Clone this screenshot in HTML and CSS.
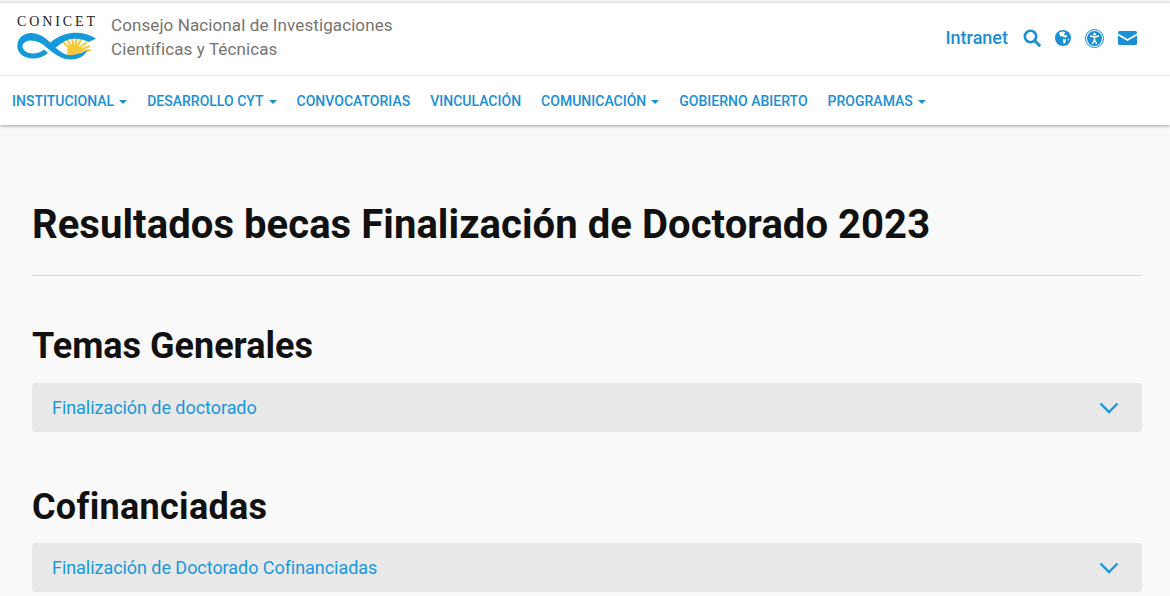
FILE: index.html
```html
<!DOCTYPE html>
<html lang="es">
<head>
    <meta charset="UTF-8">
    <title>Resultados becas Finalización de Doctorado 2023</title>
    <link rel="stylesheet" href="styles.css">
</head>
<body>
    <header class="site-header">
        <div class="top-bar">
            <a class="brand" href="#">
                <div class="logo">
                    <div class="logo-name">CONICET</div>
                    <svg class="logo-mark" width="80" height="28" viewBox="0 0 80 28">
                        <g stroke="#f7c83c" stroke-width="2.2">
                            <path d="M57 20 L46 10 M57 20 L50 7 M57 20 L55 5 M57 20 L60 5 M57 20 L65 6 M57 20 L70 10 M57 20 L73 14 M57 20 L74 18"/>
                        </g>
                        <circle cx="57" cy="19" r="7" fill="#f7c83c"/>
                        <path fill="#149ad8" d="M0.3 14 C0.3 6 7 1 14 1 C24 1 31 8 37 14 C43 20 49 24 56 23 C62 22 67 20 71 18 C67 24 62 27.5 54 27.5 C44 27.5 36 21 29 15 C24 10.5 19 8.5 14 8.5 C9 8.5 5.5 11 5.5 14 C5.5 18 10 21.5 16 21.5 C20 21.5 24 20 27 17.5 L31 21 C27 24.5 22 26.5 16 26.5 C7 26.5 0.3 21 0.3 14 Z"/>
                        <path fill="#149ad8" d="M33 11 C38 6 46 2 55 1 C63 0 72 2 79 6.5 L72 10 C66 7 60 6 54 7 C48 8 43 12 38.5 16 Z"/>
                    </svg>
                </div>
                <div class="brand-text">Consejo Nacional de Investigaciones<br>Científicas y Técnicas</div>
            </a>
            <div class="tools">
                <a class="intranet" href="#">Intranet</a>
                <a href="#" class="tool">
                    <svg width="18" height="18" viewBox="0 0 18 18"><circle cx="7.5" cy="7.5" r="5.7" fill="none" stroke="#1b8fd4" stroke-width="2.6"/><path d="M11.5 11.5 L16.3 16.3" stroke="#1b8fd4" stroke-width="3" stroke-linecap="round"/></svg>
                </a>
                <a href="#" class="tool">
                    <svg width="16" height="16" viewBox="0 0 16 16"><circle cx="8" cy="8" r="8" fill="#1b8fd4"/><path fill="#fff" d="M4 2.5 L8 1.5 L10.5 2.5 L9 4 L10 5.5 L12 5 L11.5 7.5 L9 7.5 L7 6 L5.5 6.5 L4.5 4.5 Z M8 9 L11 9.5 L10.5 12 L9 14 L8 12 Z M12.5 9.5 L14 8.5 L13.5 11 Z"/></svg>
                </a>
                <a href="#" class="tool">
                    <svg width="19" height="19" viewBox="0 0 19 19"><circle cx="9.5" cy="9.5" r="9" fill="none" stroke="#1b8fd4" stroke-width="1"/><circle cx="9.5" cy="9.5" r="7.5" fill="#1b8fd4"/><circle cx="9.5" cy="5.2" r="1.4" fill="#fff"/><path d="M5 7 L9.5 8 L14 7 M9.5 8 L9.5 11 M9.5 11 L7.3 15 M9.5 11 L11.7 15" stroke="#fff" stroke-width="1.5" fill="none"/></svg>
                </a>
                <a href="#" class="tool">
                    <svg width="19" height="14" viewBox="0 0 19 14"><path fill="#1b8fd4" d="M1.5 0 H17.5 A1.5 1.5 0 0 1 19 1.5 V2.5 L9.5 8 L0 2.5 V1.5 A1.5 1.5 0 0 1 1.5 0 Z M0 4.6 L9.5 10 L19 4.6 V12.5 A1.5 1.5 0 0 1 17.5 14 H1.5 A1.5 1.5 0 0 1 0 12.5 Z"/></svg>
                </a>
            </div>
        </div>
        <nav class="main-nav">
            <a href="#">INSTITUCIONAL<span class="caret"></span></a>
            <a href="#">DESARROLLO CYT<span class="caret"></span></a>
            <a href="#">CONVOCATORIAS</a>
            <a href="#">VINCULACIÓN</a>
            <a href="#">COMUNICACIÓN<span class="caret"></span></a>
            <a href="#">GOBIERNO ABIERTO</a>
            <a href="#">PROGRAMAS<span class="caret"></span></a>
        </nav>
    </header>
    <main class="content">
        <h1>Resultados becas Finalización de Doctorado 2023</h1>
        <hr>
        <h2>Temas Generales</h2>
        <a class="accordion" href="#">
            <span>Finalización de doctorado</span>
            <svg width="20" height="12" viewBox="0 0 20 12"><path d="M1.5 1.5 L10 10 L18.5 1.5" fill="none" stroke="#1a98db" stroke-width="2.4"/></svg>
        </a>
        <h2 class="second">Cofinanciadas</h2>
        <a class="accordion" href="#">
            <span>Finalización de Doctorado Cofinanciadas</span>
            <svg width="20" height="12" viewBox="0 0 20 12"><path d="M1.5 1.5 L10 10 L18.5 1.5" fill="none" stroke="#1a98db" stroke-width="2.4"/></svg>
        </a>
    </main>
</body>
</html>
```

FILE: styles.css
```css
* {
    margin: 0;
    padding: 0;
    box-sizing: border-box;
}
html, body {
    width: 100%;
    height: 100%;
    overflow: hidden;
}
body {
    background: #f9f9f9;
    font-family: Roboto, Arial, sans-serif;
    color: #111;
}
a {
    text-decoration: none;
}
.site-header {
    background: #fff;
    border-top: 1px solid #e2e2e2;
    margin-top: 2px;
    box-shadow: 0 1px 3px rgba(0, 0, 0, 0.35);
}
.top-bar {
    height: 73px;
    display: flex;
    align-items: center;
    justify-content: space-between;
    padding: 0 33px 2px 16px;
    border-bottom: 1px solid #e7e7e7;
}
.brand {
    display: flex;
    align-items: center;
    gap: 14px;
}
.logo {
    width: 80px;
    margin: -2px 0 0 1px;
}
.logo-name {
    font-family: "Liberation Serif", serif;
    font-size: 14px;
    line-height: 14px;
    letter-spacing: 2.9px;
    color: #222;
    white-space: nowrap;
    margin-bottom: 3px;
}
.logo-mark {
    display: block;
}
.brand-text {
    font-size: 17px;
    line-height: 24px;
    color: #77736f;
    letter-spacing: 0.1px;
    margin-top: -2px;
}
.tools {
    display: flex;
    align-items: center;
    gap: 14px;
}
.intranet {
    font-size: 18px;
    font-weight: 500;
    color: #1b8fd4;
    margin: -2px 1px 0 0;
}
.tool {
    display: flex;
    align-items: center;
}
.main-nav {
    height: 49px;
    display: flex;
    align-items: center;
    gap: 20px;
    padding: 1px 0 0 12px;
}
.main-nav a {
    font-size: 14px;
    font-weight: 500;
    letter-spacing: 0.01px;
    color: #1b8fd4;
}
.caret {
    display: inline-block;
    width: 0;
    height: 0;
    margin-left: 5px;
    vertical-align: middle;
    border-top: 4px solid #1b8fd4;
    border-left: 4px solid transparent;
    border-right: 4px solid transparent;
}
.content {
    padding: 77px 28px 0 32px;
}
h1 {
    font-size: 40px;
    line-height: 46px;
    font-weight: 700;
    letter-spacing: 0.065px;
    color: #111;
}
hr {
    border: 0;
    border-top: 1px solid #d5d5d5;
    margin-top: 27px;
}
h2 {
    font-size: 36px;
    line-height: 44px;
    font-weight: 700;
    margin-top: 48px;
    margin-bottom: 15px;
    color: #111;
}
h2.second {
    margin-top: 53px;
    margin-bottom: 14px;
    letter-spacing: 0.3px;
}
.accordion {
    height: 49px;
    display: flex;
    align-items: center;
    justify-content: space-between;
    padding: 0 23px 0 20px;
    background: #e8e8e8;
    border-radius: 4px;
    font-size: 18px;
    letter-spacing: -0.05px;
    color: #1a98db;
}
```
